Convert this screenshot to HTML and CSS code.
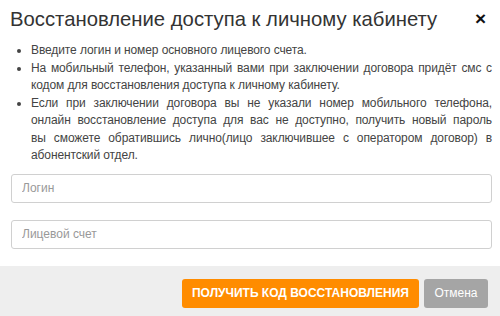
FILE: index.html
```html
<!DOCTYPE html>
<html lang="ru">
<head>
  <meta charset="UTF-8">
  <title>Восстановление доступа</title>
  <meta name="viewport" content="width=device-width, initial-scale=1.0">
  <link rel="stylesheet" href="styles.css">
</head>
<body>

  <div class="modal">
    <!-- Header -->
    <div class="modal-header">
      <h2 class="modal-title">Восстановление доступа к личному кабинету</h2>
      <span class="modal-close">&times;</span>
    </div>

    <!-- Body -->
    <div class="modal-body">
      <ul class="hint-list">
        <li>Введите логин и номер основного лицевого счета.</li>
        <li>На мобильный телефон, указанный вами при заключении договора придёт смс с кодом для восстановления доступа к личному кабинету.</li>
        <li>Если при заключении договора вы не указали номер мобильного телефона, онлайн восстановление доступа для вас не доступно, получить новый пароль вы&nbsp;сможете обратившись лично(лицо заключившее с оператором договор) в абонентский отдел.</li>
      </ul>

      <input class="field" type="text" placeholder="Логин">
      <input class="field" type="text" placeholder="Лицевой счет">
    </div>

    <!-- Footer -->
    <div class="modal-footer">
      <button class="btn btn-orange">Получить код восстановления</button>
      <button class="btn btn-gray">Отмена</button>
    </div>
  </div>

</body>
</html>
```

FILE: styles.css
```css
body {
  font-family: 'Liberation Sans', Arial, sans-serif;
  margin: 0;
  padding: 0;
  background: #fff;
  color: #333;
}

.modal {
  width: 500px;
  height: 316px;
  display: flex;
  flex-direction: column;
}

.modal-header {
  display: flex;
  justify-content: space-between;
  align-items: center;
  padding: 8px 14px 0 10px;
}

.modal-title {
  margin: 0;
  font-size: 20.3px;
  font-weight: normal;
  line-height: 22px;
  color: #333;
}

.modal-close {
  font-size: 19px;
  font-weight: bold;
  line-height: 22px;
  color: #111;
}

.modal-body {
  padding: 12px 8px 0 11px;
}

.hint-list {
  margin: 0 0 9px;
  padding-left: 20px;
  font-size: 12px;
  line-height: 17.5px;
  letter-spacing: -0.1px;
  color: #444;
  text-align: justify;
}

.field {
  display: block;
  box-sizing: border-box;
  width: 100%;
  height: 29px;
  margin: 0 0 17px;
  padding: 0 10px;
  border: 1px solid #d0d0d0;
  border-radius: 3px;
  font-family: inherit;
  font-size: 12px;
  color: #333;
}

.field::placeholder {
  color: #999;
}

.modal-footer {
  margin-top: auto;
  height: 51px;
  box-sizing: border-box;
  padding: 13px 12px 0;
  background: #eee;
  display: flex;
  justify-content: flex-end;
  align-items: flex-start;
  gap: 5px;
}

.btn {
  height: 29px;
  padding: 0 10px;
  border: none;
  border-radius: 3px;
  color: white;
  font-family: inherit;
  font-size: 12px;
  cursor: pointer;
}

.btn-orange {
  background-color: #ff8c00;
  font-weight: bold;
  text-transform: uppercase;
}

.btn-gray {
  padding: 0 10.5px;
  background-color: #a5a5a5;
}
```
